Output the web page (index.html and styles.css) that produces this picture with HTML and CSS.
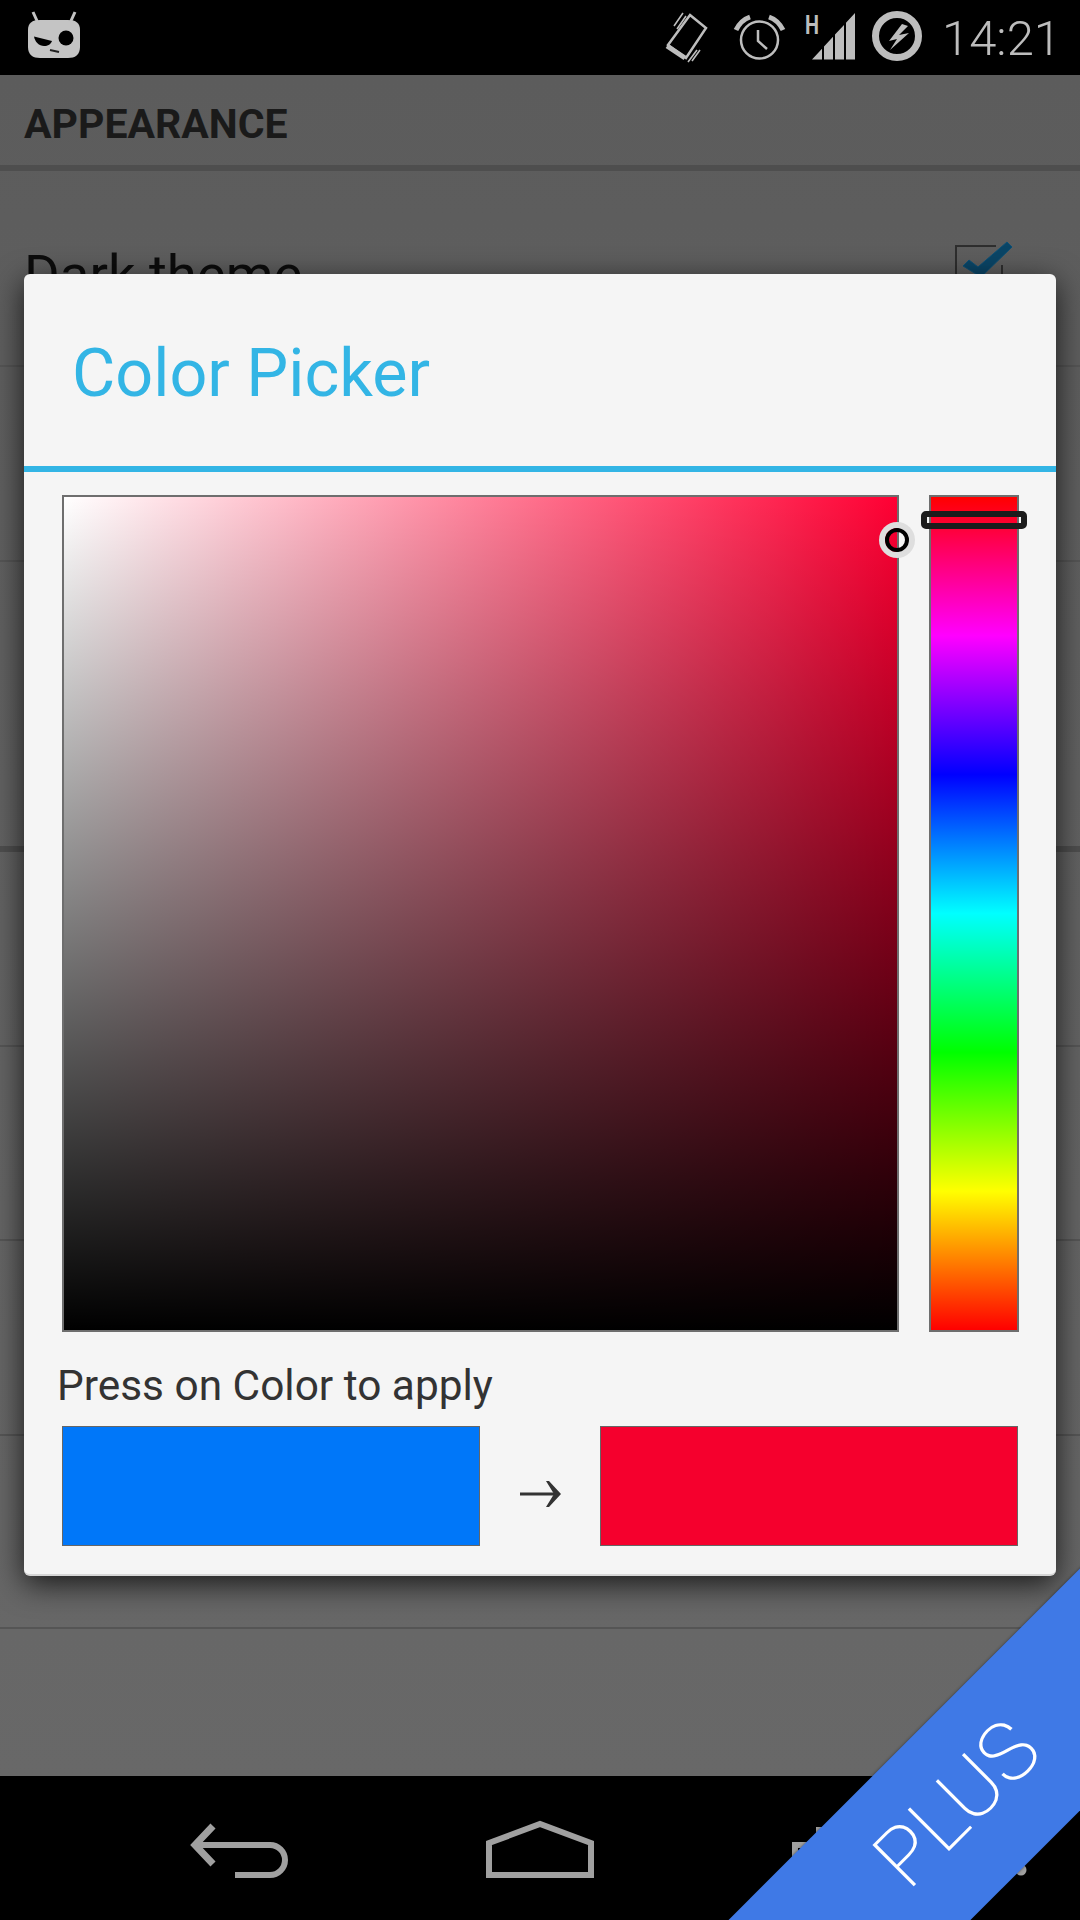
FILE: index.html
```html
<!DOCTYPE html>
<html lang="en">
<head>
  <meta charset="UTF-8" />
  <meta name="viewport" content="width=device-width, initial-scale=1.0"/>
  <title>Color Picker</title>
  <link rel="stylesheet" href="styles.css">
</head>
<body>
<div class="screen">

  <div class="status-bar">
    <svg class="logo" viewBox="24 8 64 56">
      <path class="logo-fill" d="M33 12l5 11M75 12l-5 11" />
      <path class="logo-head" d="M40 20h28c8 0 12 3 12 10v17c0 8-5 11-12 11H40c-7 0-12-3-12-11V30c0-7 4-10 12-10z" />
      <path class="logo-eye" d="M34 36.500l18 4.500c-1 3-4 5-8 5-5 0-9-4-10-9.500z" />
      <circle class="logo-eye" cx="66" cy="38" r="7.500" />
      <path class="logo-mouth" d="M50 50l9 2" />
    </svg>
    <div class="status-icons">
      <svg class="st-vibrate" viewBox="664 8 50 56">
        <path class="st-line" d="M692 15l16 13-20 30-18-13z" />
        <path class="st-line thick" d="M669 46l18 12" />
        <path class="st-thin" d="M676 26l9-13M679 29l9-13M690 62l9-12M694 61l8-11" />
      </svg>
      <svg class="st-alarm" viewBox="734 8 56 56">
        <circle class="st-line" cx="761.500" cy="40" r="18.500" />
        <path class="st-line" d="M760 30v11l9 8" />
        <path class="st-line thick" d="M738 30c3-6 8-11 14-13M785 30c-3-6-8-11-14-13" />
      </svg>
      <svg class="st-signal" viewBox="804 8 56 56">
        <text class="st-h" x="807" y="34" textLength="14" lengthAdjust="spacingAndGlyphs">H</text>
        <path class="st-fill" d="M814 59.500L824 48.700V59.500zM826 46.500L835 36.800V59.500H826zM837 34.600L846 24.900V59.500H837zM848 22.800L857 13V59.500H848z" />
      </svg>
      <svg class="st-charge" viewBox="872 8 54 56">
        <circle class="st-ring" cx="899" cy="36" r="21.500" />
        <path class="st-fill" d="M904 24l6 2-9 9 10-2-19 17 7-11-8 2z" />
      </svg>
      <span class="clock">14:21</span>
    </div>
  </div>

  <div class="settings">
    <div class="section-head">APPEARANCE</div>
    <div class="row row-first">
      <span class="row-title">Dark theme</span>
      <svg class="check" viewBox="950 238 66 60">
        <path class="check-box" d="M995 246H955V296H1001V265" />
        <path class="check-mark" d="M1006 242l5 5-31 30-18-11 6-6 9 7z" />
      </svg>
    </div>
    <div class="row row-b"></div>
    <div class="row row-c"></div>
    <div class="row row-d"></div>
    <div class="row row-e"></div>
    <div class="row row-f"></div>
    <div class="row row-g"></div>
  </div>

  <div class="nav-bar">
    <svg class="nav-back" viewBox="180 1815 120 75">
      <path class="nav-stroke" d="M235 1875h35a15 15 0 0 0 0-30h-76" />
      <path class="nav-head" d="M213 1826l-18 19 18 19" />
    </svg>
    <svg class="nav-home" viewBox="480 1815 120 75">
      <path class="nav-stroke" d="M489 1843l51-19 51 19v32H489z" />
    </svg>
    <svg class="nav-recent" viewBox="780 1815 120 75">
      <path class="nav-stroke" d="M819 1870V1830h60v40zM795 1885V1845h60v40z" />
    </svg>
    <svg class="nav-menu" viewBox="1000 1815 40 75">
      <circle class="nav-dot" cx="1021" cy="1870" r="5.500" />
    </svg>
  </div>

  <div class="dialog">
    <div class="dialog-head">Color Picker</div>
    <div class="dialog-body">
      <div class="picker">
        <div class="sat-box">
          <span class="sat-pointer"></span>
        </div>
        <div class="hue-bar">
          <span class="hue-tracker"></span>
        </div>
      </div>
      <div class="hint">Press on Color to apply</div>
      <div class="swatches">
        <div class="swatch swatch-old"></div>
        <svg class="arrow" viewBox="0 0 41 26">
          <path class="arrow-line" d="M0 13h38" />
          <path class="arrow-head" d="M26 0l3 0 12 13-12 13-3 0 8-13z" />
        </svg>
        <div class="swatch swatch-new"></div>
      </div>
    </div>
  </div>

  <div class="ribbon"><span class="ribbon-text">PLUS</span></div>

</div>
</body>
</html>
```

FILE: styles.css
```css
body {
  margin: 0;
  background-color: #000;
  font-family: Roboto, "Liberation Sans", sans-serif;
}
.screen {
  position: relative;
  width: 1080px;
  height: 1920px;
  overflow: hidden;
  display: flex;
  flex-direction: column;
}

/* status bar */
.status-bar {
  height: 75px;
  background-color: #000;
  display: flex;
  justify-content: space-between;
  padding: 8px 19px 0 24px;
  box-sizing: border-box;
}
.status-bar svg {
  display: block;
  height: 56px;
}
.logo { width: 64px; }
.logo-fill {
  fill: none;
  stroke: #c4c4c4;
  stroke-width: 3;
}
.logo-head { fill: #c4c4c4; }
.logo-eye { fill: #000; }
.logo-mouth {
  fill: none;
  stroke: #222;
  stroke-width: 2;
}
.status-icons {
  display: flex;
}
.st-vibrate { width: 50px; margin-right: 20px; }
.st-alarm { width: 56px; margin-right: 14px; }
.st-signal { width: 56px; margin-right: 12px; }
.st-charge { width: 54px; margin-right: 18px; }
.st-line {
  fill: none;
  stroke: #bdbdbd;
  stroke-width: 2.5;
}
.st-line.thick { stroke-width: 5; }
.st-thin {
  fill: none;
  stroke: #bdbdbd;
  stroke-width: 1.6;
}
.st-fill { fill: #bdbdbd; }
.st-ring {
  fill: none;
  stroke: #bdbdbd;
  stroke-width: 7;
}
.st-h {
  fill: #bdbdbd;
  font-size: 25px;
  font-weight: 700;
}
.clock {
  color: #bdbdbd;
  font-size: 49px;
  font-weight: 300;
  line-height: 56px;
  padding-top: 3px;
}

/* settings list, dimmed behind the dialog */
.settings {
  flex: 1;
  background: linear-gradient(#5c5c5c, #686868);
}
.section-head {
  height: 90px;
  line-height: 99px;
  border-bottom: 6px solid #4e4e4e;
  padding-left: 24px;
  color: #1a1a1a;
  font-size: 41px;
  font-weight: 700;
}
.row {
  box-sizing: border-box;
  border-bottom: 2px solid #555;
  height: 195px;
}
.row-first {
  position: relative;
  height: 196px;
  padding: 68px 63px 0 24px;
  display: flex;
  justify-content: space-between;
  align-items: flex-start;
}
.row-title {
  color: #0c0c0c;
  font-size: 54.500px;
  line-height: 70px;
}
.check {
  width: 66px;
  height: 60px;
  margin-top: -1px;
}
.check-box {
  fill: none;
  stroke: #2e2e2e;
  stroke-width: 2;
}
.check-mark {
  fill: #0a4566;
  stroke: #0c5076;
  stroke-width: 1;
}
.row-b { height: 195px; }
.row-c { height: 290px; border-bottom: 6px solid #4e4e4e; }
.row-d { height: 195px; }
.row-e { height: 194px; }
.row-f { height: 195px; }
.row-g { height: 193px; }

/* nav bar */
.nav-bar {
  height: 144px;
  background-color: #000;
  display: flex;
  padding: 39px 0 0 180px;
  box-sizing: border-box;
}
.nav-bar svg {
  display: block;
  height: 75px;
}
.nav-back { width: 120px; }
.nav-home { width: 120px; margin-left: 180px; }
.nav-recent { width: 120px; margin-left: 180px; }
.nav-menu { width: 40px; margin-left: 100px; }
.nav-stroke {
  fill: none;
  stroke: #a0a0a0;
  stroke-width: 6;
}
.nav-head {
  fill: none;
  stroke: #a0a0a0;
  stroke-width: 7;
}
.nav-dot { fill: #a0a0a0; }

/* dialog */
.dialog {
  position: absolute;
  top: 274px;
  left: 24px;
  width: 1032px;
  height: 1302px;
  box-sizing: border-box;
  background-color: #f5f5f5;
  border-radius: 6px;
  border-bottom: 2px solid #d6d6d6;
  box-shadow: 0 8px 30px rgba(0,0,0,0.75);
}
.dialog-head {
  height: 192px;
  line-height: 198px;
  border-bottom: 6px solid #33b5e5;
  padding-left: 48px;
  color: #33b5e5;
  font-size: 66.500px;
}
.dialog-body {
  padding: 23px 37px 0 38px;
}
.picker {
  display: flex;
  justify-content: space-between;
}
.sat-box {
  position: relative;
  width: 837px;
  height: 837px;
  box-sizing: border-box;
  border: 2px solid #6e6e6e;
  background:
    linear-gradient(to top, #000, rgba(0,0,0,0)),
    linear-gradient(to right, #fff, #ff0033);
}
.sat-pointer {
  position: absolute;
  top: 31px;
  right: -12px;
  width: 24px;
  height: 24px;
  box-sizing: border-box;
  border: 4px solid #000;
  border-radius: 50%;
  box-shadow: 0 0 0 6px #dedede;
}
.hue-bar {
  position: relative;
  width: 90px;
  height: 837px;
  box-sizing: border-box;
  border: 2px solid #6e6e6e;
  background: linear-gradient(#f00, #f0f, #00f, #0ff, #0f0, #ff0, #f00);
}
.hue-tracker {
  position: absolute;
  top: 14px;
  left: -10px;
  width: 106px;
  height: 18px;
  box-sizing: border-box;
  border: 6px solid #1c1c1c;
  border-radius: 5px;
}
.hint {
  margin: 19px 0 0 -5px;
  height: 75px;
  line-height: 70px;
  color: #333;
  font-size: 42.400px;
}
.swatches {
  display: flex;
  justify-content: space-between;
  align-items: flex-start;
  margin-right: 1px;
}
.swatch {
  width: 418px;
  height: 120px;
  box-sizing: border-box;
  border: 1px solid #666;
}
.swatch-old { background-color: #0077f9; }
.swatch-new { background-color: #f5002d; }
.arrow {
  width: 41px;
  height: 26px;
  margin-top: 55px;
}
.arrow-line {
  fill: none;
  stroke: #333;
  stroke-width: 3;
}
.arrow-head { fill: #333; }

/* corner ribbon */
.ribbon {
  position: absolute;
  left: 555px;
  top: 1729px;
  width: 800px;
  height: 171px;
  background-color: #3f79e6;
  box-shadow: 0 0 3px rgba(0,0,0,0.5);
  transform: rotate(-45deg);
  display: flex;
  justify-content: center;
  align-items: center;
}
.ribbon-text {
  color: #fff;
  font-size: 82px;
  font-weight: 200;
  line-height: 82px;
  margin: 0 0 14px 18px;
}
```
